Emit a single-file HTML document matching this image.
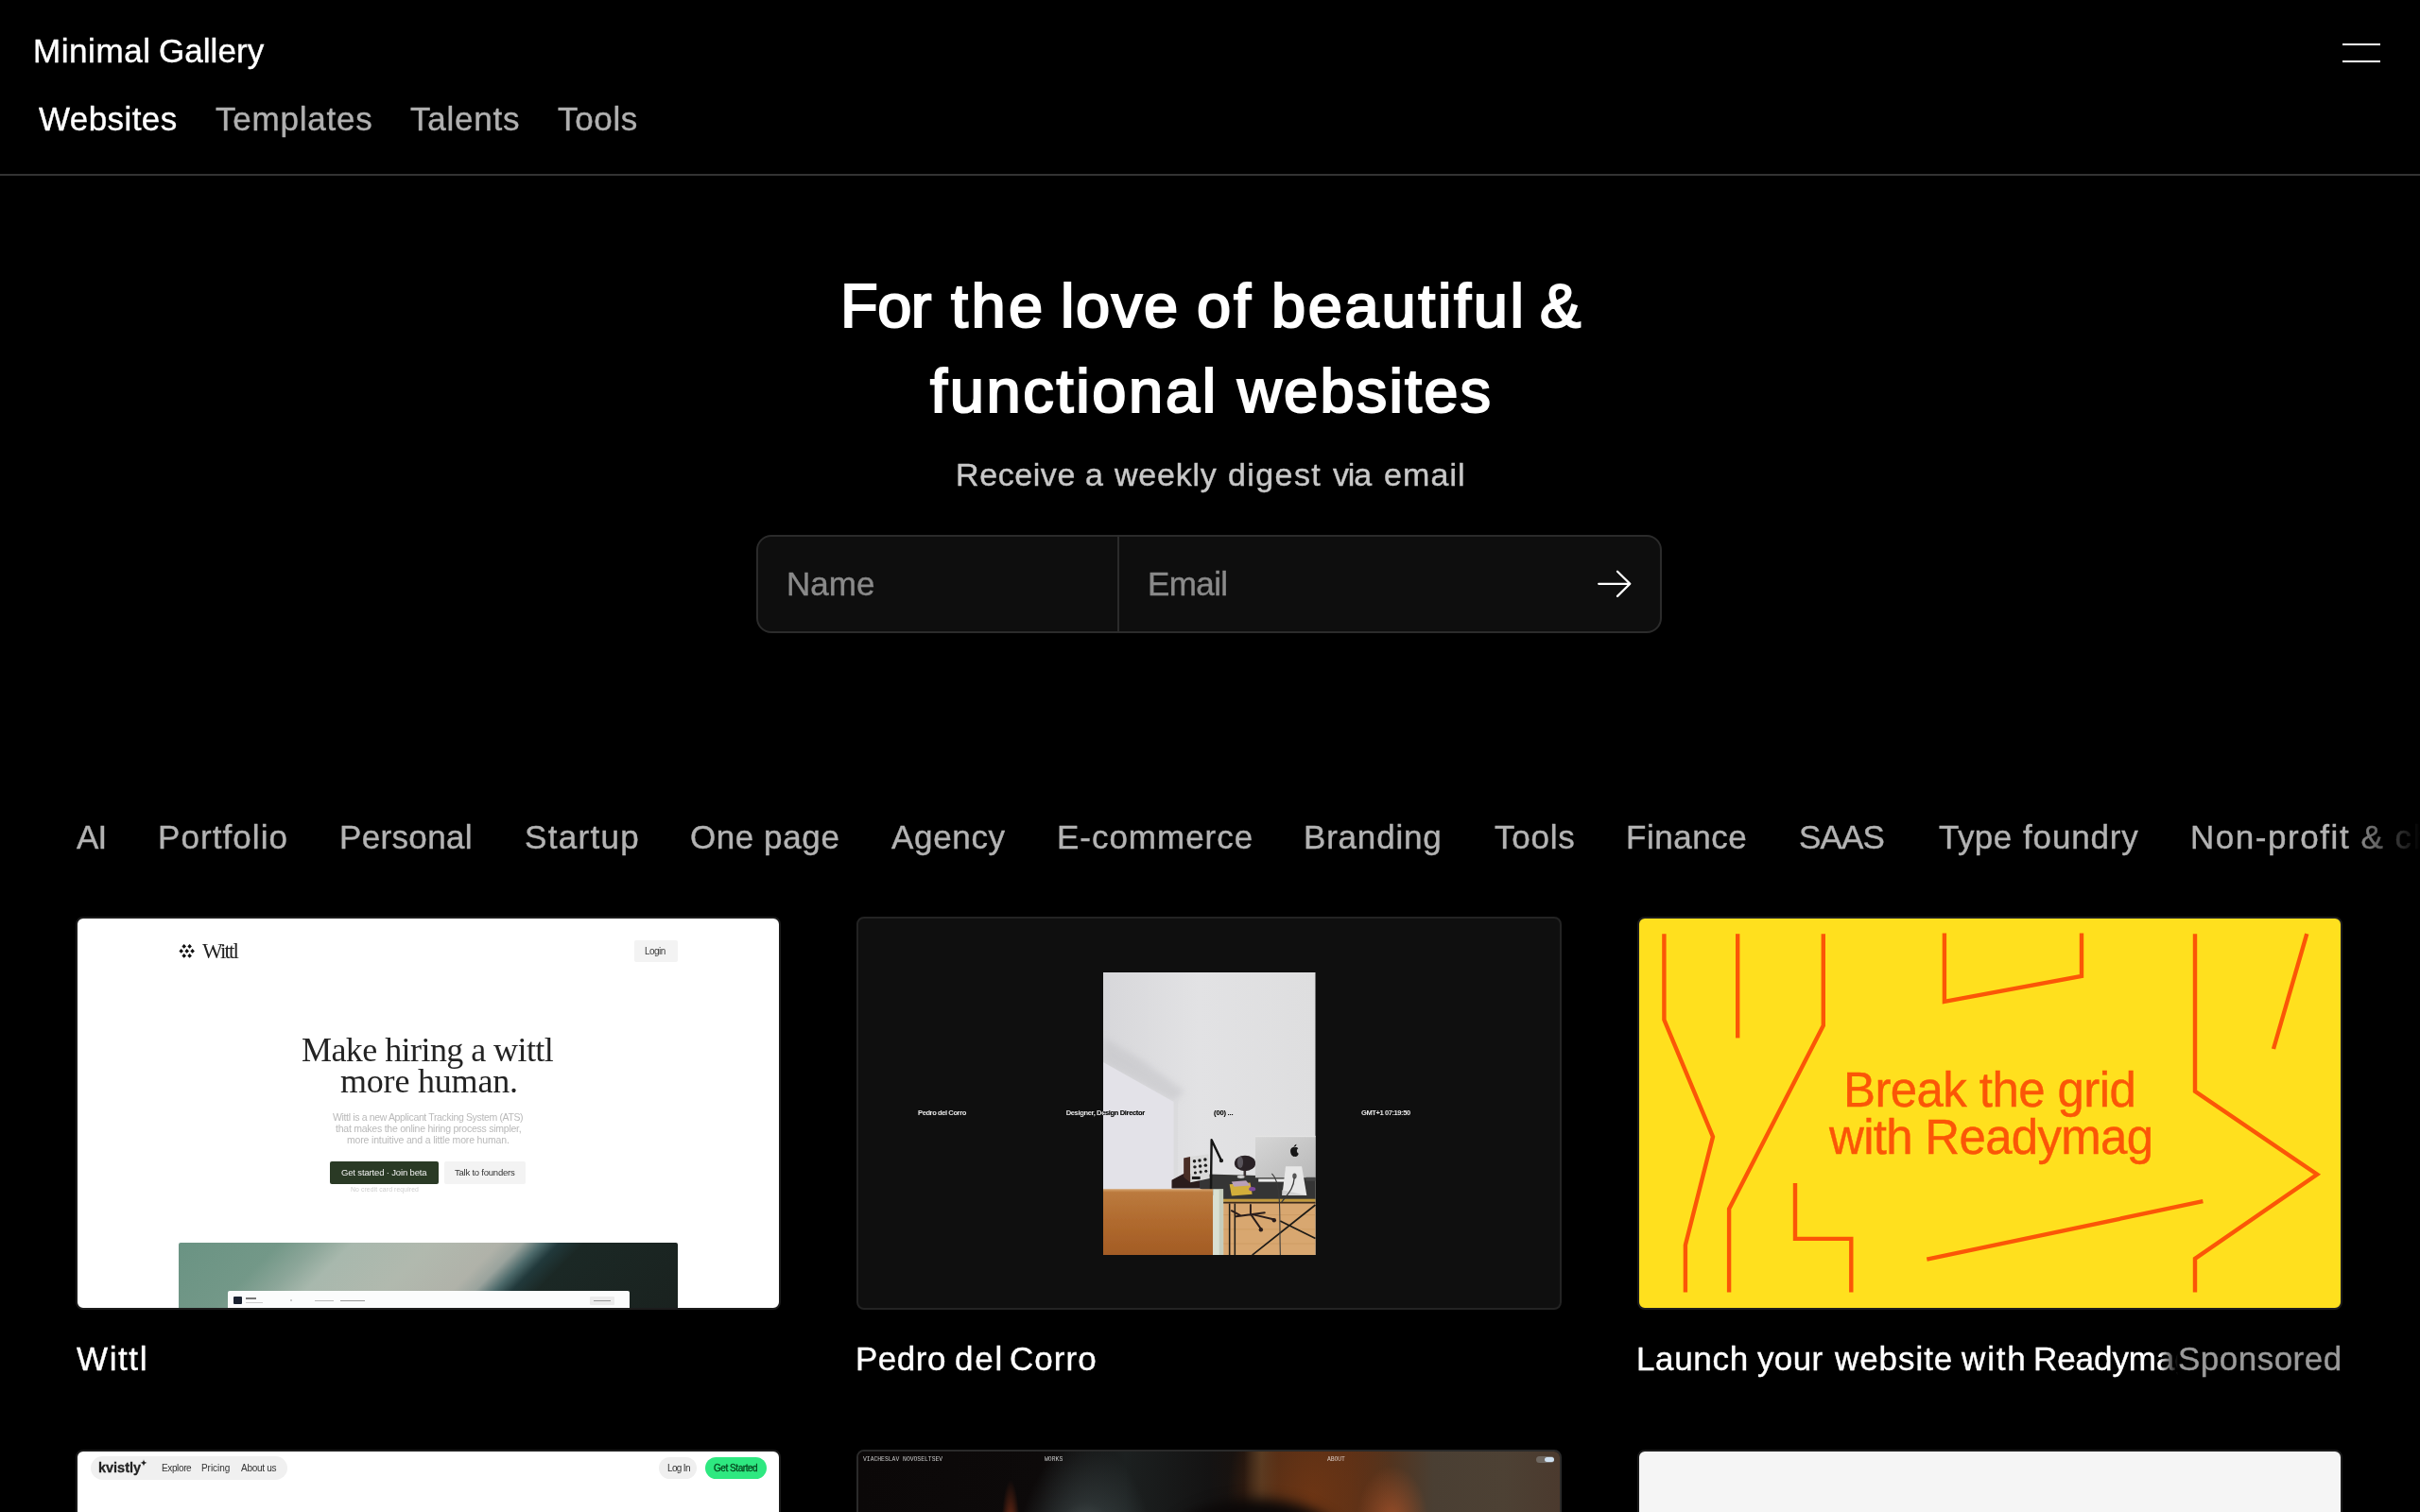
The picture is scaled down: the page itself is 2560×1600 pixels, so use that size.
<!DOCTYPE html>
<html><head><meta charset="utf-8"><title>Minimal Gallery</title>
<style>
html,body{margin:0;padding:0;background:#000;}
@media (max-width:1400px){html{zoom:.5;}}
body{width:2560px;height:1600px;position:relative;overflow:hidden;font-family:"Liberation Sans",sans-serif;}
.t{position:absolute;white-space:nowrap;line-height:1;will-change:transform;}
.r{position:absolute;}
.bl{position:absolute;left:0;top:0;width:2560px;height:1600px;filter:blur(.45px);}
.card{position:absolute;box-sizing:border-box;border-radius:8px;overflow:hidden;}
</style></head><body>
<span class="t" style="left:35.17px;top:36.17px;font-size:35px;color:#fff;letter-spacing:0.562px;font-family:'Liberation Sans',sans-serif;font-weight:400;-webkit-text-stroke:0.4px #fff;">Minimal</span>
<span class="t" style="left:167.96px;top:36.17px;font-size:35px;color:#fff;letter-spacing:0.046px;font-family:'Liberation Sans',sans-serif;font-weight:400;-webkit-text-stroke:0.4px #fff;">Gallery</span>
<span class="t" style="left:40.70px;top:108.37px;font-size:35px;color:#fff;letter-spacing:0.414px;font-family:'Liberation Sans',sans-serif;font-weight:400;-webkit-text-stroke:0.4px #fff;">Websites</span>
<span class="t" style="left:227.65px;top:108.37px;font-size:35px;color:#b0b0b0;letter-spacing:0.791px;font-family:'Liberation Sans',sans-serif;font-weight:400;-webkit-text-stroke:0.4px #b0b0b0;">Templates</span>
<span class="t" style="left:433.95px;top:108.37px;font-size:35px;color:#b0b0b0;letter-spacing:0.774px;font-family:'Liberation Sans',sans-serif;font-weight:400;-webkit-text-stroke:0.4px #b0b0b0;">Talents</span>
<span class="t" style="left:590.15px;top:108.37px;font-size:35px;color:#b0b0b0;letter-spacing:0.659px;font-family:'Liberation Sans',sans-serif;font-weight:400;-webkit-text-stroke:0.4px #b0b0b0;">Tools</span>
<div class="r" style="left:2478px;top:46px;width:40px;height:2px;background:#fff"></div>
<div class="r" style="left:2478px;top:64px;width:40px;height:2px;background:#fff"></div>
<div class="r" style="left:0;top:184px;width:2560px;height:2px;background:#333"></div>
<span class="t" style="left:888.67px;top:290.98px;font-size:65px;color:#fff;letter-spacing:-0.502px;font-family:'Liberation Sans',sans-serif;font-weight:400;-webkit-text-stroke:2.1px #fff;">For</span>
<span class="t" style="left:1006.45px;top:290.98px;font-size:65px;color:#fff;letter-spacing:3.388px;font-family:'Liberation Sans',sans-serif;font-weight:400;-webkit-text-stroke:2.1px #fff;">the</span>
<span class="t" style="left:1121.79px;top:290.98px;font-size:65px;color:#fff;letter-spacing:1.619px;font-family:'Liberation Sans',sans-serif;font-weight:400;-webkit-text-stroke:2.1px #fff;">love</span>
<span class="t" style="left:1266.22px;top:290.98px;font-size:65px;color:#fff;letter-spacing:2.800px;font-family:'Liberation Sans',sans-serif;font-weight:400;-webkit-text-stroke:2.1px #fff;">of</span>
<span class="t" style="left:1345.19px;top:290.98px;font-size:65px;color:#fff;letter-spacing:2.662px;font-family:'Liberation Sans',sans-serif;font-weight:400;-webkit-text-stroke:2.1px #fff;">beautiful</span>
<span class="t" style="left:1628.62px;top:290.98px;font-size:65px;color:#fff;letter-spacing:0.000px;font-family:'Liberation Sans',sans-serif;font-weight:400;-webkit-text-stroke:2.1px #fff;">&amp;</span>
<span class="t" style="left:983.75px;top:380.98px;font-size:65px;color:#fff;letter-spacing:2.659px;font-family:'Liberation Sans',sans-serif;font-weight:400;-webkit-text-stroke:2.1px #fff;">functional</span>
<span class="t" style="left:1309.37px;top:380.98px;font-size:65px;color:#fff;letter-spacing:2.161px;font-family:'Liberation Sans',sans-serif;font-weight:400;-webkit-text-stroke:2.1px #fff;">websites</span>
<span class="t" style="left:1011.44px;top:484.92px;font-size:34px;color:#c8c8c8;letter-spacing:0.583px;font-family:'Liberation Sans',sans-serif;font-weight:400;-webkit-text-stroke:0.4px #c8c8c8;">Receive</span>
<span class="t" style="left:1148.44px;top:484.92px;font-size:34px;color:#c8c8c8;letter-spacing:0.000px;font-family:'Liberation Sans',sans-serif;font-weight:400;-webkit-text-stroke:0.4px #c8c8c8;">a</span>
<span class="t" style="left:1178.93px;top:484.92px;font-size:34px;color:#c8c8c8;letter-spacing:0.789px;font-family:'Liberation Sans',sans-serif;font-weight:400;-webkit-text-stroke:0.4px #c8c8c8;">weekly</span>
<span class="t" style="left:1298.94px;top:484.92px;font-size:34px;color:#c8c8c8;letter-spacing:1.404px;font-family:'Liberation Sans',sans-serif;font-weight:400;-webkit-text-stroke:0.4px #c8c8c8;">digest</span>
<span class="t" style="left:1409.90px;top:484.92px;font-size:34px;color:#c8c8c8;letter-spacing:-1.189px;font-family:'Liberation Sans',sans-serif;font-weight:400;-webkit-text-stroke:0.4px #c8c8c8;">via</span>
<span class="t" style="left:1463.94px;top:484.92px;font-size:34px;color:#c8c8c8;letter-spacing:1.089px;font-family:'Liberation Sans',sans-serif;font-weight:400;-webkit-text-stroke:0.4px #c8c8c8;">email</span>
<div class="r" style="left:800px;top:566px;width:958px;height:104px;box-sizing:border-box;border:2px solid #2b2b2b;border-radius:16px;background:#0e0e0e"></div>
<div class="r" style="left:1182px;top:568px;width:2px;height:100px;background:#2b2b2b"></div>
<span class="t" style="left:832.07px;top:600.17px;font-size:35px;color:#8a8a8a;letter-spacing:0.064px;font-family:'Liberation Sans',sans-serif;font-weight:400;-webkit-text-stroke:0.4px #8a8a8a;">Name</span>
<span class="t" style="left:1214.27px;top:600.17px;font-size:35px;color:#8a8a8a;letter-spacing:-0.594px;font-family:'Liberation Sans',sans-serif;font-weight:400;-webkit-text-stroke:0.4px #8a8a8a;">Email</span>
<svg class="r" style="left:1680px;top:596px" width="56" height="44" viewBox="1680 596 56 44"><path d="M1691.2 617.8H1724M1711 604.8L1724.3 617.8L1711 630.9" fill="none" stroke="#fff" stroke-width="2.3" stroke-linecap="round" stroke-linejoin="round"/></svg>
<span class="t" style="left:80.90px;top:868.37px;font-size:35px;color:#b3b3b3;letter-spacing:-0.807px;font-family:'Liberation Sans',sans-serif;font-weight:400;-webkit-text-stroke:0.4px #b3b3b3;">AI</span>
<span class="t" style="left:166.97px;top:868.37px;font-size:35px;color:#b3b3b3;letter-spacing:1.082px;font-family:'Liberation Sans',sans-serif;font-weight:400;-webkit-text-stroke:0.4px #b3b3b3;">Portfolio</span>
<span class="t" style="left:359.17px;top:868.37px;font-size:35px;color:#b3b3b3;letter-spacing:0.343px;font-family:'Liberation Sans',sans-serif;font-weight:400;-webkit-text-stroke:0.4px #b3b3b3;">Personal</span>
<span class="t" style="left:555.11px;top:868.37px;font-size:35px;color:#b3b3b3;letter-spacing:1.311px;font-family:'Liberation Sans',sans-serif;font-weight:400;-webkit-text-stroke:0.4px #b3b3b3;">Startup</span>
<span class="t" style="left:943.20px;top:868.37px;font-size:35px;color:#b3b3b3;letter-spacing:0.672px;font-family:'Liberation Sans',sans-serif;font-weight:400;-webkit-text-stroke:0.4px #b3b3b3;">Agency</span>
<span class="t" style="left:1118.07px;top:868.37px;font-size:35px;color:#b3b3b3;letter-spacing:0.977px;font-family:'Liberation Sans',sans-serif;font-weight:400;-webkit-text-stroke:0.4px #b3b3b3;">E-commerce</span>
<span class="t" style="left:1379.07px;top:868.37px;font-size:35px;color:#b3b3b3;letter-spacing:0.800px;font-family:'Liberation Sans',sans-serif;font-weight:400;-webkit-text-stroke:0.4px #b3b3b3;">Branding</span>
<span class="t" style="left:1581.25px;top:868.37px;font-size:35px;color:#b3b3b3;letter-spacing:0.734px;font-family:'Liberation Sans',sans-serif;font-weight:400;-webkit-text-stroke:0.4px #b3b3b3;">Tools</span>
<span class="t" style="left:1720.47px;top:868.37px;font-size:35px;color:#b3b3b3;letter-spacing:0.539px;font-family:'Liberation Sans',sans-serif;font-weight:400;-webkit-text-stroke:0.4px #b3b3b3;">Finance</span>
<span class="t" style="left:1903.11px;top:868.37px;font-size:35px;color:#b3b3b3;letter-spacing:-0.838px;font-family:'Liberation Sans',sans-serif;font-weight:400;-webkit-text-stroke:0.4px #b3b3b3;">SAAS</span>
<span class="t" style="left:730.26px;top:868.37px;font-size:35px;color:#b3b3b3;letter-spacing:0.552px;font-family:'Liberation Sans',sans-serif;font-weight:400;-webkit-text-stroke:0.4px #b3b3b3;">One</span>
<span class="t" style="left:807.51px;top:868.37px;font-size:35px;color:#b3b3b3;letter-spacing:0.682px;font-family:'Liberation Sans',sans-serif;font-weight:400;-webkit-text-stroke:0.4px #b3b3b3;">page</span>
<span class="t" style="left:2050.65px;top:868.37px;font-size:35px;color:#b3b3b3;letter-spacing:0.429px;font-family:'Liberation Sans',sans-serif;font-weight:400;-webkit-text-stroke:0.4px #b3b3b3;">Type</span>
<span class="t" style="left:2140.00px;top:868.37px;font-size:35px;color:#b3b3b3;letter-spacing:0.843px;font-family:'Liberation Sans',sans-serif;font-weight:400;-webkit-text-stroke:0.4px #b3b3b3;">foundry</span>
<span class="t" style="left:2317.17px;top:868.37px;font-size:35px;color:#b3b3b3;letter-spacing:1.550px;font-family:'Liberation Sans',sans-serif;font-weight:400;-webkit-text-stroke:0.4px #b3b3b3;">Non-profit &amp; charity</span>
<div class="r" style="left:2478px;top:850px;width:82px;height:80px;background:linear-gradient(90deg,rgba(0,0,0,0),#000 100%)"></div>
<div class="card" style="left:80px;top:970px;width:746px;height:416px;border:2px solid #1c1c1c;background:#fff"></div>
<div class="card" style="left:906px;top:970px;width:746px;height:416px;border:2px solid #232323;background:#0f0f0f"></div>
<div class="card" style="left:1732px;top:970px;width:746px;height:416px;border:2px solid #1c1c1c;background:#ffe01e"></div>
<div class="card" style="left:80px;top:1534px;width:746px;height:416px;border:2px solid #1c1c1c;background:#fff"></div>
<div class="card" style="left:906px;top:1534px;width:746px;height:416px;border:2px solid #2a2a2a;background:#0c0909" id="c5"></div>
<div class="card" style="left:1732px;top:1534px;width:746px;height:416px;border:2px solid #1c1c1c;background:#f5f5f5"></div>
<div class="bl">
<svg class="r" style="left:186px;top:996px" width="24" height="22" viewBox="186 996 24 22"><path d="M194.7 999.1L197.0 1001.4L194.7 1003.7L192.4 1001.4ZM200.6 999.1L202.9 1001.4L200.6 1003.7L198.3 1001.4ZM191.7 1004.1L194.0 1006.4L191.7 1008.7L189.4 1006.4ZM197.7 1004.1L200.0 1006.4L197.7 1008.7L195.4 1006.4ZM203.6 1004.1L205.9 1006.4L203.6 1008.7L201.3 1006.4ZM194.7 1009.1L197.0 1011.4L194.7 1013.7L192.4 1011.4ZM200.6 1009.1L202.9 1011.4L200.6 1013.7L198.3 1011.4Z" fill="#111"/></svg>
<span class="t" style="left:214.40px;top:994.74px;font-size:23px;color:#222;letter-spacing:-1.865px;font-family:'Liberation Serif',serif;font-weight:400;">Wittl</span>
<div class="r" style="left:670.7px;top:995px;width:46.6px;height:23.4px;background:#f3f3f3;border-radius:2px;"></div>
<span class="t" style="left:682.20px;top:1002.33px;font-size:10px;color:#3a3a3a;letter-spacing:-0.527px;font-family:'Liberation Sans',sans-serif;font-weight:400;">Login</span>
<span class="t" style="left:319.24px;top:1092.85px;font-size:36px;color:#232323;letter-spacing:-0.563px;font-family:'Liberation Serif',serif;font-weight:400;">Make hiring a wittl</span>
<span class="t" style="left:360.24px;top:1126.25px;font-size:36px;color:#232323;letter-spacing:-0.194px;font-family:'Liberation Serif',serif;font-weight:400;">more human.</span>
<span class="t" style="left:352.20px;top:1176.91px;font-size:10.5px;color:#b9b9b9;letter-spacing:-0.352px;font-family:'Liberation Sans',sans-serif;font-weight:400;">Wittl is a new Applicant Tracking System (ATS)</span>
<span class="t" style="left:354.80px;top:1189.11px;font-size:10.5px;color:#b9b9b9;letter-spacing:-0.238px;font-family:'Liberation Sans',sans-serif;font-weight:400;">that makes the online hiring process simpler,</span>
<span class="t" style="left:367.10px;top:1201.41px;font-size:10.5px;color:#b9b9b9;letter-spacing:-0.163px;font-family:'Liberation Sans',sans-serif;font-weight:400;">more intuitive and a little more human.</span>
<div class="r" style="left:349.2px;top:1229.4px;width:114.6px;height:23.3px;background:#2a3a25;border-radius:2px;"></div>
<span class="t" style="left:360.80px;top:1236.16px;font-size:9.5px;color:#f2f2f2;letter-spacing:-0.155px;font-family:'Liberation Sans',sans-serif;font-weight:400;">Get started · Join beta</span>
<div class="r" style="left:469.6px;top:1229.4px;width:86.9px;height:23.3px;background:#f3f3f3;border-radius:2px;"></div>
<span class="t" style="left:481.00px;top:1236.16px;font-size:9.5px;color:#333;letter-spacing:-0.221px;font-family:'Liberation Sans',sans-serif;font-weight:400;">Talk to founders</span>
<span class="t" style="left:370.50px;top:1256.24px;font-size:6.8px;color:#cfcfcf;letter-spacing:0.123px;font-family:'Liberation Sans',sans-serif;font-weight:400;">No credit card required</span>
<div class="r" style="left:189.3px;top:1314.7px;width:527.6px;height:69.3px;background:linear-gradient(135deg,#6a9383 0%,#739888 18%,#8ca699 25%,#a8b8ad 31%,#b1b9ae 45%,#b0b2a9 57%,#9aa39d 61%,#4d6a6b 64.5%,#21393b 67.5%,#1b2825 72%,#1a221f 100%);border-radius:2px 2px 0 0;"></div>
<div class="r" style="left:240.7px;top:1365.8px;width:425.1px;height:18.2px;background:#fbfcfc;border-radius:2px 2px 0 0;"></div>
<div class="r" style="left:247.2px;top:1372px;width:8.8px;height:8.2px;background:#1b2230;border-radius:1px;"></div>
<div class="r" style="left:259.5px;top:1372.5px;width:11px;height:2px;background:#777;"></div>
<div class="r" style="left:259.5px;top:1377.5px;width:18px;height:1.6px;background:#ccc;"></div>
<div class="r" style="left:307px;top:1375px;width:1.6px;height:1.6px;background:#ccc;"></div>
<div class="r" style="left:333px;top:1375.5px;width:20px;height:1.6px;background:#bbb;"></div>
<div class="r" style="left:360px;top:1375.5px;width:26px;height:1.6px;background:#999;"></div>
<div class="r" style="left:624px;top:1371.5px;width:26px;height:9px;background:#ececec;border-radius:1px;"></div>
<div class="r" style="left:628px;top:1375.5px;width:18px;height:1.6px;background:#999;"></div>
<svg class="r" style="left:1167px;top:1028.6px" width="224.5" height="299.1" viewBox="78 85 1028 1370" preserveAspectRatio="none">
<defs>
<linearGradient id="pw" x1="0" y1="0" x2="1" y2="0"><stop offset="0" stop-color="#d7d7da"/><stop offset=".45" stop-color="#e2e2e4"/><stop offset="1" stop-color="#dededf"/></linearGradient>
<linearGradient id="pc" x1="0" y1="0" x2="0" y2="1"><stop offset="0" stop-color="#d6a46e"/><stop offset=".05" stop-color="#bb7a3e"/><stop offset=".5" stop-color="#b06a2e"/><stop offset="1" stop-color="#a35c25"/></linearGradient>
<linearGradient id="ps" x1="0" y1="0" x2="1" y2="1"><stop offset="0" stop-color="#c4c4c8" stop-opacity=".9"/><stop offset="1" stop-color="#d8d8dc" stop-opacity="0"/></linearGradient>
<linearGradient id="pm" x1="0" y1="0" x2="1" y2="1"><stop offset="0" stop-color="#d6d6d6"/><stop offset="1" stop-color="#b9b9b9"/></linearGradient>
<filter id="pb" x="-5%" y="-5%" width="110%" height="110%"><feGaussianBlur stdDeviation="2.6"/></filter>
<filter id="pb2" x="-20%" y="-20%" width="140%" height="140%"><feGaussianBlur stdDeviation="18"/></filter>
</defs>
<rect x="78" y="85" width="1028" height="1370" fill="url(#pw)"/>
<polygon points="78,400 78,520 420,712 470,660 250,500" fill="#c4c4c8" opacity=".55" filter="url(#pb2)"/>
<polygon points="78,520 420,712 420,1135 78,1135" fill="#e3e2e8"/>
<polygon points="420,712 440,700 440,1135 420,1135" fill="#d9d9dc" opacity=".8"/>
<g filter="url(#pb)">
<polygon points="660,1195 1106,1195 1106,1455 660,1455" fill="#d8a76f"/>
<path d="M660 1260H1106M660 1330H1106M660 1400H1106" stroke="#c99860" stroke-width="3" fill="none"/>
<polygon points="410,1092 470,1060 545,1062 545,1132 410,1132" fill="#2a1a1b"/>
<polygon points="545,1062 1106,1078 1106,1186 650,1186 545,1132" fill="#363634"/>
<rect x="650" y="1183" width="456" height="14" fill="#c29a3e"/>
<rect x="650" y="1197" width="456" height="8" fill="#3a2a1a"/>
<polygon points="468,985 500,978 500,1103 468,1078" fill="#4a2d28"/>
<polygon points="500,978 588,966 594,1084 500,1103" fill="#d9d9d9"/>
<g fill="#1a1a1a"><circle cx="520" cy="1000" r="8"/><circle cx="545" cy="996" r="8"/><circle cx="572" cy="992" r="8"/><circle cx="522" cy="1028" r="8"/><circle cx="548" cy="1024" r="8"/><circle cx="574" cy="1020" r="8"/><circle cx="524" cy="1056" r="7"/><circle cx="550" cy="1052" r="7"/><circle cx="576" cy="1048" r="7"/><rect x="508" y="1074" width="40" height="14"/></g>
<path d="M600 1135L603 897L648 992" stroke="#121212" stroke-width="11" fill="none" stroke-linejoin="round" stroke-linecap="round"/>
<circle cx="650" cy="997" r="10" fill="#1a1a1a"/>
<ellipse cx="765" cy="1010" rx="51" ry="38" fill="#2a2326"/>
<ellipse cx="742" cy="1005" rx="14" ry="28" fill="#6d6870" opacity=".7"/>
<rect x="758" y="1045" width="12" height="30" fill="#3a3032"/>
<ellipse cx="745" cy="1076" rx="18" ry="7" fill="#cfcfcf"/>
<rect x="815" y="877" width="291" height="203" fill="url(#pm)"/>
<rect x="815" y="877" width="291" height="6" fill="#e4e4e4"/>
<path d="M1000 932c4-10 12-14 14-14c1 8-6 14-14 14zM985 950c0-14 12-20 20-16c6-3 14-1 18 4c-10 6-9 20 2 25c-5 12-12 18-20 14c-8 4-20-8-20-27z" fill="#151515"/>
<rect x="830" y="1086" width="130" height="14" fill="#ececec"/>
<polygon points="962,1025 1040,1025 1064,1166 945,1166" fill="#e7e7e7"/>
<polygon points="945,1140 1064,1166 945,1166" fill="#d0d0d0"/>
<ellipse cx="1005" cy="1072" rx="10" ry="14" fill="#555"/>
<polygon points="690,1112 790,1104 800,1160 700,1168" fill="#d2ae3a"/>
<polygon points="700,1100 770,1094 790,1118 712,1124" fill="#b9a0b8"/>
<ellipse cx="800" cy="1135" rx="16" ry="10" fill="#7a4a9a"/>
<rect x="1060" y="1078" width="46" height="18" fill="#444"/>
<path d="M690 1205V1455M716 1205V1455" stroke="#1c1a18" stroke-width="7" fill="none"/>
<path d="M800 1455L1106 1212M935 1290L1106 1374" stroke="#1c1a18" stroke-width="8" fill="none"/>
<path d="M895 1060C945 1110 930 1250 936 1455" stroke="#3a3a3a" stroke-width="5" fill="none"/>
<path d="M1004 1080C1000 1140 965 1165 942 1200" stroke="#3a3a3a" stroke-width="6" fill="none"/>
<path d="M792 1212V1258M722 1268L860 1250M792 1256L842 1328M792 1256L902 1282M740 1262L700 1240" stroke="#2a1f1c" stroke-width="9" fill="none" stroke-linecap="round"/>
<circle cx="842" cy="1332" r="10" fill="#2a1f1c"/><circle cx="906" cy="1286" r="10" fill="#2a1f1c"/>
<rect x="78" y="1135" width="532" height="320" fill="url(#pc)"/>
<rect x="610" y="1135" width="50" height="320" fill="#d9e0d2"/>
<rect x="640" y="1135" width="20" height="320" fill="#b9c0ae" opacity=".6"/>
</g>
</svg>

<span class="t" style="left:971.40px;top:1173.67px;font-size:7.6px;color:#e6e6e6;letter-spacing:-0.435px;font-family:'Liberation Sans',sans-serif;font-weight:700;">Pedro del Corro</span>
<span class="t" style="left:1127.70px;top:1173.67px;font-size:7.6px;color:#e6e6e6;letter-spacing:-0.390px;font-family:'Liberation Sans',sans-serif;font-weight:700;mix-blend-mode:difference;will-change:auto;">Designer, Design Director</span>
<span class="t" style="left:1284.10px;top:1173.67px;font-size:7.6px;color:#e6e6e6;letter-spacing:-0.221px;font-family:'Liberation Sans',sans-serif;font-weight:700;mix-blend-mode:difference;will-change:auto;">(00) ...</span>
<span class="t" style="left:1439.90px;top:1173.67px;font-size:7.6px;color:#e6e6e6;letter-spacing:-0.451px;font-family:'Liberation Sans',sans-serif;font-weight:700;">GMT+1 07:19:50</span>
</div>
<svg class="r" style="left:1734px;top:972px" width="742" height="412" viewBox="1734 972 742 412">
<g fill="none" stroke="#fb5607" stroke-width="4.4" stroke-linejoin="miter" stroke-linecap="butt">
<path d="M1760.4 988.2V1079.1L1812 1202.8L1782.9 1317.4V1367.6"/>
<path d="M1838.2 988.2V1098.4"/>
<path d="M1928.8 988.2V1085.3L1829.1 1279.2V1367.6"/>
<path d="M2056.9 987.5V1059.9L2202 1032.9V987.5"/>
<path d="M2322 988.2V1154.8L2451.2 1242.8L2322 1332V1367.6"/>
<path d="M2440.3 988.2L2405 1110"/>
<path d="M1899 1251.9V1310.9H1958.3V1367.6"/>
<path d="M2038.3 1332.7L2330.4 1271.2"/>
</g></svg>
<span class="t" style="left:1950.12px;top:1128.13px;font-size:51px;color:#fb5607;letter-spacing:-0.597px;font-family:'Liberation Sans',sans-serif;font-weight:400;-webkit-text-stroke:1px #fb5607;-webkit-text-stroke:0.4px #fb5607;">Break the grid</span>
<span class="t" style="left:1934.90px;top:1178.33px;font-size:51px;color:#fb5607;letter-spacing:-0.702px;font-family:'Liberation Sans',sans-serif;font-weight:400;-webkit-text-stroke:1px #fb5607;-webkit-text-stroke:0.4px #fb5607;">with Readymag</span>
<div class="bl">
<div class="r" style="left:95.5px;top:1541px;width:208.8px;height:25.2px;background:#f0f0f0;border-radius:13px;"></div>
<span class="t" style="left:104.15px;top:1546.03px;font-size:14.5px;color:#222;letter-spacing:-0.013px;font-family:'Liberation Sans',sans-serif;font-weight:700;-webkit-text-stroke:0.3px #222;">kvistly</span>
<svg class="r" style="left:148px;top:1544px" width="8" height="8" viewBox="0 0 8 8"><path d="M4 0.3C4.2 2.6 5.4 3.8 7.7 4C5.4 4.2 4.2 5.4 4 7.7C3.8 5.4 2.6 4.2 0.3 4C2.6 3.8 3.8 2.6 4 0.3Z" fill="#222"/></svg>
<span class="t" style="left:170.80px;top:1548.63px;font-size:10px;color:#333;letter-spacing:-0.374px;font-family:'Liberation Sans',sans-serif;font-weight:400;">Explore</span>
<span class="t" style="left:213.40px;top:1548.63px;font-size:10px;color:#333;letter-spacing:-0.051px;font-family:'Liberation Sans',sans-serif;font-weight:400;">Pricing</span>
<span class="t" style="left:255.00px;top:1548.63px;font-size:10px;color:#333;letter-spacing:-0.282px;font-family:'Liberation Sans',sans-serif;font-weight:400;">About us</span>
<div class="r" style="left:697.2px;top:1542.4px;width:40.1px;height:22.8px;background:#efefef;border-radius:12px;"></div>
<span class="t" style="left:705.60px;top:1548.63px;font-size:10px;color:#333;letter-spacing:-0.648px;font-family:'Liberation Sans',sans-serif;font-weight:400;">Log In</span>
<div class="r" style="left:746px;top:1542.2px;width:65.2px;height:23px;background:#2ee880;border-radius:12px;"></div>
<span class="t" style="left:755.40px;top:1548.63px;font-size:10px;color:#06481f;letter-spacing:-0.448px;font-family:'Liberation Sans',sans-serif;font-weight:400;-webkit-text-stroke:0.3px #06481f;">Get Started</span>
<div class="r" style="left:908px;top:1536px;width:742px;height:64px;overflow:hidden;border-radius:6px 6px 0 0;">
<div class="r" style="left:0;top:0;width:742px;height:412px;background:
radial-gradient(ellipse 75px 140px at 240px 130px,rgba(120,136,136,.85),rgba(70,82,84,.45) 55%,rgba(0,0,0,0) 100%),
radial-gradient(ellipse 10px 60px at 161px 90px,rgba(150,55,25,.9),rgba(0,0,0,0) 100%),
radial-gradient(ellipse 38px 60px at 565px 75px,rgba(165,82,42,.85),rgba(0,0,0,0) 100%),
radial-gradient(ellipse 90px 130px at 480px 50px,rgba(112,54,20,.9),rgba(100,50,22,.5) 60%,rgba(0,0,0,0) 100%),
linear-gradient(90deg,#0b0808 0%,#0d0a0a 26%,#1c2020 38%,#141313 50%,#1a120e 55%,#54422a 57.5%,#4a2c16 60%,#5a3016 70%,#52341f 76%,#4a3f33 82%,#4d4134 92%,#4b3a2e 100%)"></div>
<div class="r" style="left:320px;top:50px;width:200px;height:120px;border-radius:50%;background:#0b0808;filter:blur(7px)"></div>
</div>
<span class="t" style="left:913.20px;top:1541.89px;font-size:6.4px;color:#c4c4c4;letter-spacing:-0.012px;font-family:'Liberation Mono',monospace;font-weight:400;">VIACHESLAV NOVOSELTSEV</span>
<span class="t" style="left:1105.00px;top:1541.89px;font-size:6.4px;color:#c4c4c4;letter-spacing:0.009px;font-family:'Liberation Mono',monospace;font-weight:400;">WORKS</span>
<span class="t" style="left:1404.00px;top:1541.89px;font-size:6.4px;color:#d8c8c0;letter-spacing:-0.116px;font-family:'Liberation Mono',monospace;font-weight:400;">ABOUT</span>
<div class="r" style="left:1624.9px;top:1541px;width:19.3px;height:6.5px;background:rgba(120,115,110,.8);border-radius:3.5px;"></div>
<div class="r" style="left:1634px;top:1541.8px;width:9.5px;height:5px;background:#cfe0f0;border-radius:2.5px;"></div>
</div>
<span class="t" style="left:80.70px;top:1420.37px;font-size:35px;color:#fff;letter-spacing:1.593px;font-family:'Liberation Sans',sans-serif;font-weight:400;-webkit-text-stroke:0.4px #fff;">Wittl</span>
<span class="t" style="left:905.07px;top:1420.37px;font-size:35px;color:#fff;letter-spacing:0.514px;font-family:'Liberation Sans',sans-serif;font-weight:400;-webkit-text-stroke:0.4px #fff;">Pedro</span>
<span class="t" style="left:1010.11px;top:1420.37px;font-size:35px;color:#fff;letter-spacing:1.747px;font-family:'Liberation Sans',sans-serif;font-weight:400;-webkit-text-stroke:0.4px #fff;">del</span>
<span class="t" style="left:1067.76px;top:1420.37px;font-size:35px;color:#fff;letter-spacing:1.060px;font-family:'Liberation Sans',sans-serif;font-weight:400;-webkit-text-stroke:0.4px #fff;">Corro</span>
<span class="t" style="left:1730.97px;top:1420.37px;font-size:35px;color:#fff;letter-spacing:0.655px;font-family:'Liberation Sans',sans-serif;font-weight:400;-webkit-text-stroke:0.4px #fff;">Launch</span>
<span class="t" style="left:1859.20px;top:1420.37px;font-size:35px;color:#fff;letter-spacing:0.362px;font-family:'Liberation Sans',sans-serif;font-weight:400;-webkit-text-stroke:0.4px #fff;">your</span>
<span class="t" style="left:1940.75px;top:1420.37px;font-size:35px;color:#fff;letter-spacing:0.933px;font-family:'Liberation Sans',sans-serif;font-weight:400;-webkit-text-stroke:0.4px #fff;">website</span>
<span class="t" style="left:2075.45px;top:1420.37px;font-size:35px;color:#fff;letter-spacing:1.859px;font-family:'Liberation Sans',sans-serif;font-weight:400;-webkit-text-stroke:0.4px #fff;">with</span>
<span class="t" style="left:2150.97px;top:1420.37px;font-size:35px;color:#fff;letter-spacing:-0.065px;font-family:'Liberation Sans',sans-serif;font-weight:400;-webkit-text-stroke:0.4px #fff;">Readymag</span>
<div class="r" style="left:2284px;top:1405px;width:196px;height:65px;background:linear-gradient(90deg,rgba(0,0,0,0) 0,#000 20px);"></div>
<span class="t" style="left:2304.11px;top:1419.97px;font-size:35px;color:#9a9a9a;letter-spacing:0.483px;font-family:'Liberation Sans',sans-serif;font-weight:400;-webkit-text-stroke:0.4px #9a9a9a;">Sponsored</span>
</body></html>
